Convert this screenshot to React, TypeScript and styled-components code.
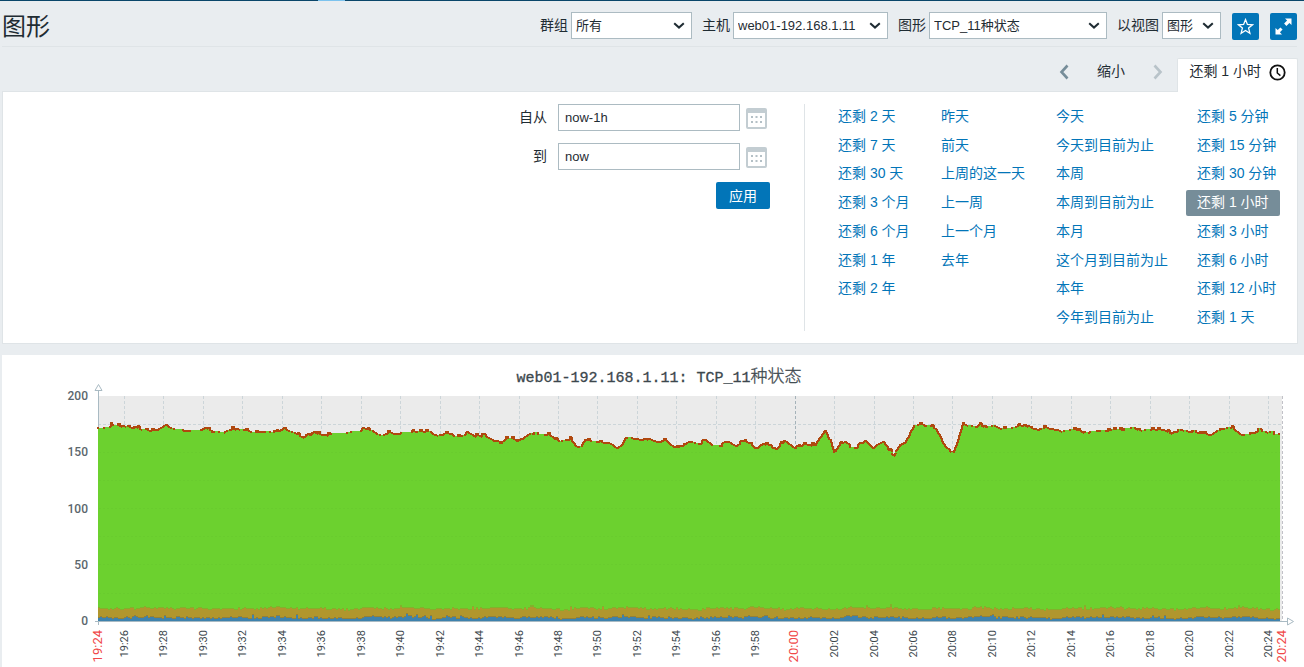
import React from 'react';
import styled, { createGlobalStyle } from 'styled-components';

const sans = '"Liberation Sans", Arial, "Noto Sans CJK SC", sans-serif';

const GlobalStyle = createGlobalStyle`
  *, *::before, *::after { box-sizing: border-box; }
  body {
    margin: 0;
    background: #e9edf0;
    color: #1f2c33;
    font-family: ${sans};
    font-size: 14px;
    font-weight: 400;
  }
  button, input, select { font-family: inherit; font-weight: inherit; color: inherit; }
`;

const NavEdge = styled.div`
  height: 1px;
  padding-left: 318px;
  background: #0a466a;
`;

const NavActive = styled.div`
  width: 27px;
  height: 1px;
  background: #7cc3ee;
`;

const Article = styled.main`
  padding: 0 0 0 2px;
`;

const Header = styled.header`
  display: flex;
  align-items: center;
  justify-content: space-between;
  height: 46px;
  margin-right: 7px;
  padding-top: 4px;
  border-bottom: 1px solid #dfe4e7;
`;

const Title = styled.h1`
  margin: 0;
  padding-top: 2px;
  font-size: 24px;
  line-height: 28px;
  font-weight: 400;
`;

const Filters = styled.form`
  display: flex;
  align-items: center;
  gap: 10px;
`;

const Field = styled.div`
  display: flex;
  align-items: center;
  gap: 3px;
  white-space: nowrap;
`;

const Label = styled.label`
  padding-bottom: 3px;
`;

const SelectBox = styled.div<{ $width: number }>`
  position: relative;
  width: ${(p) => p.$width}px;

  svg {
    position: absolute;
    top: 10px;
    right: 7px;
    pointer-events: none;
  }
`;

const Select = styled.select`
  display: block;
  width: 100%;
  height: 27px;
  padding: 0 0 1px 4px;
  border: 1px solid #acbbc2;
  border-radius: 0;
  background-color: #fff;
  font-size: 13px;
  appearance: none;
`;

const IconButton = styled.button`
  display: flex;
  align-items: center;
  justify-content: center;
  width: 27px;
  height: 27px;
  padding: 0;
  border: 0;
  border-radius: 2px;
  background: #0275b8;
`;

const ButtonPair = styled.div`
  display: flex;
  gap: 11px;
  margin-left: 1px;
  padding-top: 2px;
`;

const TimeBar = styled.nav`
  display: flex;
  justify-content: flex-end;
  height: 45px;
  margin: 0 6px -1px 0;
  padding-top: 11px;
`;

const BarButton = styled.button`
  display: flex;
  align-items: center;
  justify-content: center;
  height: 27px;
  padding: 0;
  border: 0;
  background: transparent;
`;

const ArrowButton = styled(BarButton)`
  width: 27px;
`;

const ZoomOutButton = styled(BarButton)`
  width: 67px;
  padding-bottom: 3px;
  font-size: 14px;
`;

const TimeTab = styled.a`
  display: flex;
  align-items: flex-start;
  gap: 8px;
  height: 34px;
  margin-left: 6px;
  padding: 0 11px;
  border: 1px solid #dfe4e7;
  border-bottom: 0;
  border-radius: 2px 2px 0 0;
  background: #fff;
  color: inherit;
  line-height: 24px;
  text-decoration: none;
  white-space: nowrap;
  z-index: 1;

  svg { margin-top: 5px; }
`;

const TimePanel = styled.section`
  display: flex;
  margin: 0 6px 11px 0;
  padding: 12px 9px 12px 0;
  border: 1px solid #dfe4e7;
  background: #fff;
`;

const RangeForm = styled.form`
  display: flex;
  flex: 1;
  flex-direction: column;
  align-items: flex-end;
  gap: 12px;
  padding-right: 34px;
  border-right: 1px solid #dfe4e7;
`;

const RangeRow = styled.div`
  display: flex;
  align-items: center;
`;

const TextInput = styled.input`
  width: 182px;
  height: 27px;
  margin-left: 11px;
  padding: 0 6px;
  border: 1px solid #acbbc2;
  background: #fff;
  font-size: 13px;
`;

const CalendarButton = styled.button`
  width: 24px;
  height: 21px;
  margin-left: 6px;
  padding: 0;
  border: 0;
  background: transparent;
  text-align: left;

  svg { display: block; margin-top: 1px; }
`;

const ApplyButton = styled.button`
  width: 54px;
  height: 27px;
  padding: 0 0 2px;
  border: 0;
  border-radius: 2px;
  background: #0275b8;
  && { color: #fff; }
  font-size: 14px;
`;

const Presets = styled.div`
  display: grid;
  grid-template-columns: 103px 115px 141px 102px;
  height: 227px;
  margin-left: 22px;
`;

const PresetList = styled.ul`
  display: grid;
  grid-template-rows: repeat(8, 26px);
  align-content: space-between;
  justify-items: start;
  margin: 0;
  padding: 0;
  list-style: none;
`;

const PresetLink = styled.a<{ $selected?: boolean }>`
  display: block;
  padding: 0 11px 2px;
  border-radius: 2px;
  background: ${(p) => (p.$selected ? '#768d99' : 'transparent')};
  color: ${(p) => (p.$selected ? '#fff' : '#0275b8')};
  line-height: 24px;
  text-decoration: none;
  white-space: nowrap;
`;

const ChartCard = styled.section`
  background: #fff;

  svg { display: block; width: 100%; height: auto; }
`;

const ChartTitle = styled.text`
  fill: #3c474d;
  stroke: #3c474d;
  stroke-width: 0.3px;
  font-family: "Liberation Mono", "Noto Sans CJK SC", monospace;
  font-size: 15px;
  font-weight: 400;

  tspan { font-size: 17px; font-weight: 300; }
`;

const ValueLabel = styled.text`
  fill: #5a666c;
  font-family: Roboto, sans-serif;
  font-size: 12px;
  font-weight: 500;
`;

const TimeLabel = styled.text<{ $major?: boolean }>`
  fill: ${(p) => (p.$major ? '#f04848' : '#3c474d')};
  font-family: Roboto, sans-serif;
  font-size: ${(p) => (p.$major ? 13 : 11)}px;
  font-weight: 400;
`;

const presets = [
  ['还剩 2 天', '还剩 7 天', '还剩 30 天', '还剩 3 个月', '还剩 6 个月', '还剩 1 年', '还剩 2 年'],
  ['昨天', '前天', '上周的这一天', '上一周', '上一个月', '去年'],
  ['今天', '今天到目前为止', '本周', '本周到目前为止', '本月', '这个月到目前为止', '本年', '今年到目前为止'],
  ['还剩 5 分钟', '还剩 15 分钟', '还剩 30 分钟', '还剩 1 小时', '还剩 3 小时', '还剩 6 小时', '还剩 12 小时', '还剩 1 天'],
];

// Chart geometry, in the units of the SVG view box.
const LEFT = 96;
const RIGHT = 1278;
const TOP = 41;
const BASE = 266;
const OX = 2;
const OY = 355;

// Turning points of the total connection count.
const outline: [number, number][] = [
  [98, 427], [105, 426], [110, 425], [111, 421], [113, 424], [122, 424], [130, 426], [137, 425], [140, 428], [152, 429], [157, 428],
  [163, 425], [166, 423], [169, 426], [175, 428], [190, 429], [200, 429], [205, 426], [213, 430], [224, 431], [228, 428],
  [234, 427], [247, 429], [252, 431], [264, 430], [275, 431], [283, 427], [285, 428], [293, 431], [298, 433], [302, 436],
  [309, 434], [315, 432], [325, 433], [335, 432], [345, 432], [352, 430], [360, 430], [363, 426], [366, 428], [372, 429],
  [377, 433], [382, 434], [388, 431], [395, 432], [405, 431], [420, 430], [430, 430], [433, 433], [451, 432], [454, 435],
  [464, 434], [468, 431], [474, 434], [483, 434], [490, 437], [498, 442], [503, 440], [506, 437], [513, 437], [519, 441],
  [524, 436], [530, 432], [536, 433], [549, 433], [554, 437], [560, 440], [570, 437], [576, 445], [581, 444], [585, 438],
  [592, 440], [608, 441], [613, 444], [617, 447], [622, 443], [625, 436], [632, 436], [639, 438], [648, 437], [656, 440],
  [666, 439], [672, 444], [676, 447], [682, 443], [690, 440], [700, 443], [705, 438], [712, 444], [722, 444], [728, 440],
  [736, 445], [745, 438], [755, 447], [761, 443], [767, 441], [776, 448], [784, 439], [795, 447], [803, 443], [815, 443],
  [820, 436], [825, 429], [830, 440], [834, 450], [840, 443], [845, 440], [850, 446], [857, 446], [865, 439], [873, 447],
  [877, 443], [883, 440], [889, 448], [894, 454], [896, 449], [900, 443], [905, 441], [909, 433], [914, 424], [920, 423],
  [930, 424], [936, 428], [941, 437], [946, 446], [953, 451], [956, 444], [960, 431], [963, 423], [968, 424], [975, 425],
  [980, 423], [984, 426], [994, 424], [1000, 427], [1010, 427], [1024, 423], [1030, 425], [1037, 428], [1045, 426],
  [1060, 429], [1075, 428], [1086, 431], [1100, 429], [1120, 428], [1134, 426], [1138, 429], [1150, 428], [1162, 428],
  [1170, 431], [1185, 429], [1192, 431], [1205, 432], [1210, 434], [1220, 427], [1232, 426], [1240, 433], [1250, 433],
  [1258, 429], [1268, 431], [1275, 433], [1281, 432],
];

function makeRandom(seed: number) {
  let state = seed;
  return () => {
    state = (state + 0x6d2b79f5) | 0;
    let t = Math.imul(state ^ (state >>> 15), 1 | state);
    t = (t + Math.imul(t ^ (t >>> 7), 61 | t)) ^ t;
    return ((t ^ (t >>> 14)) >>> 0) / 4294967296;
  };
}

function outlineAt(x: number): number {
  const px = x + OX;
  const next = Math.max(1, outline.findIndex(([ax]) => ax >= px));
  const [x0, y0] = outline[next - 1];
  const [x1, y1] = outline[next];
  return y0 + ((y1 - y0) * (px - x0)) / (x1 - x0) - OY;
}

function buildSeries() {
  const random = makeRandom(42);
  const top: [number, number][] = [];
  let red = '';
  let previous = Math.round(outlineAt(LEFT));
  let jitter = 0;
  let marked = false;
  for (let x = LEFT; x < RIGHT; x += 1) {
    if (x % 2 === 0) {
      const roll = random();
      jitter = roll < 0.16 ? -2 : roll < 0.26 ? 1 : 0;
      if (random() < 0.4) marked = random() < 0.35;
    }
    const y = Math.round(outlineAt(x)) + jitter + 1;
    top.push([x, y]);
    const low = Math.min(y, previous);
    const height = Math.abs(y - previous) + 1;
    if (y !== previous) red += `M${x - 1} ${low}h2v${height}h-2z`;
    else if (marked) red += `M${x} ${y}h1v2h-1z`;
    previous = y;
  }
  return { top, red };
}

function buildBand(seed: number, level: number, swell: number): [number, number][] {
  const random = makeRandom(seed);
  const points: [number, number][] = [];
  for (let x = LEFT; x < RIGHT; x += 2) {
    const wave = Math.sin(x / 19) * swell + Math.sin(x / 7) * swell;
    const spike = random() < 0.05 ? 2 : 0;
    points.push([x, Math.round(level - wave - random() * 2 - spike)]);
  }
  return points;
}

function areaPath(points: [number, number][], step: number): string {
  return `M${LEFT} ${BASE}` + points.map(([x, y]) => `V${y}H${Math.min(x + step, RIGHT)}`).join('') + `V${BASE}Z`;
}

const series = buildSeries();
const fringe = buildBand(7, 254, 0.5);
const olive = fringe.map(([x, y]): [number, number] => [x, Math.max(y + 1, 252)]);
const blueShade = buildBand(19, 263, 0.5);
const blue = blueShade.map(([x, y]): [number, number] => [x, y + 1]);

const ticks = Array.from({ length: 30 }, (_, i) => {
  const minutes = 19 * 60 + 26 + i * 2;
  const label = `${Math.floor(minutes / 60)}:${String(minutes % 60).padStart(2, '0')}`;
  return { x: Math.round(122 + i * 39.45), label, major: label === '20:00' };
});

const Chart = () => (
  <svg viewBox="0 0 1302 312" role="img" aria-label="TCP_11种状态">
    <rect x={LEFT} y={TOP} width={1280 - LEFT} height={BASE - TOP} fill="#ebebeb" />
    <g shapeRendering="crispEdges" fill="none" stroke="#ccd5d9" strokeDasharray="3 2">
      {ticks.map((t) => (
        <path key={t.label} d={`M${t.x + 0.5} ${TOP}V${BASE}`} stroke={t.major ? '#a5b2b9' : undefined} />
      ))}
      <path d="M96 69.5H1280" />
      <path d="M1280.5 41V266" stroke="#c2c2c8" />
    </g>
    <path d="M96.5 35V270" stroke="#a9bac3" shapeRendering="crispEdges" />
    <g shapeRendering="crispEdges">
      <path d={areaPath(series.top, 1)} fill="#6cd12f" />
      <path d={series.red} fill="#b0480f" />
      <path d={areaPath(fringe, 2)} fill="#82b12b" />
      <path d={areaPath(olive, 2)} fill="#b1962d" />
      <path d={areaPath(blueShade, 2)} fill="#92803a" />
      <path d={areaPath(blue, 2)} fill="#3e82ad" />
    </g>
    <g shapeRendering="crispEdges" fill="none">
      <path d="M93 266.5H1285" stroke="#a9bac3" />
      <path d="M97 97.5H1278M97 125.5H1278M97 153.5H1278M97 181.5H1278M97 209.5H1278M97 238.5H1278" stroke="#69cc2e" strokeDasharray="2 2" />
    </g>
    <g fill="#fff" stroke="#a9bac3">
      <path d="M93 35.5H100L96.5 29.5Z" />
      <path d="M1285.5 263V270L1291.5 266.5Z" />
    </g>
    <ChartTitle x={657} y={27} textAnchor="middle">web01-192.168.1.11: TCP_11<tspan>种状态</tspan></ChartTitle>
    {[200, 150, 100, 50, 0].map((value, i) => (
      <ValueLabel key={value} x={86} y={45 + Math.round(i * 56.25)} textAnchor="end">{value}</ValueLabel>
    ))}
    {ticks.map((t) => (
      <TimeLabel key={t.label} $major={t.major} transform={`translate(${t.x + (t.major ? 3 : 4)} 275) rotate(-90)`} textAnchor="end">
        {t.label}
      </TimeLabel>
    ))}
    <TimeLabel $major transform="translate(100 275) rotate(-90)" textAnchor="end">19:24</TimeLabel>
    <TimeLabel $major transform="translate(1284 275) rotate(-90)" textAnchor="end">20:24</TimeLabel>
  </svg>
);

const StarIcon = () => (
  <svg width="17" height="17" viewBox="0 0 17 17" fill="none" stroke="#fff" strokeWidth="1.3">
    <path d="M8.5 1.6L10.4 6.5L15.6 6.8L11.6 10.1L12.9 15.2L8.5 12.4L4.1 15.2L5.4 10.1L1.4 6.8L6.6 6.5Z" />
  </svg>
);

const ExpandIcon = () => (
  <svg width="17" height="17" viewBox="0 0 17 17" fill="#fff">
    <path d="M10 0.5H16.5V7L14.4 4.9L11.4 7.9L9.1 5.6L12.1 2.6ZM0.5 9.9L2.7 12.1L5.4 9.4L7.6 11.6L4.9 14.3L7 16.5H0.5Z" />
  </svg>
);

const DropIcon = () => (
  <svg width="12" height="8" viewBox="0 0 12 8" fill="none" stroke="#1f2c33" strokeWidth="2">
    <path d="M1.2 1.2L6 5.6L10.8 1.2" />
  </svg>
);

const Chevron = ({ right }: { right?: boolean }) => (
  <svg width="10" height="16" viewBox="0 0 10 16" fill="none" stroke={right ? '#b8c3c9' : '#768d99'} strokeWidth="2.6">
    <path d={right ? 'M1.5 1.5L7.5 8L1.5 14.5' : 'M8.5 1.5L2.5 8L8.5 14.5'} />
  </svg>
);

const ClockIcon = () => (
  <svg width="17" height="17" viewBox="0 0 17 17" fill="none" stroke="#111" strokeWidth="1.8">
    <circle cx="8.5" cy="8.5" r="7.2" />
    <path d="M8.3 4V9L11.4 11.6" strokeWidth="1.5" />
  </svg>
);

const CalendarIcon = () => (
  <svg width="21" height="21" viewBox="0 0 21 21">
    <rect x="1" y="1" width="19" height="19" rx="1" fill="#fff" stroke="#c3cdd2" strokeWidth="2" />
    <path d="M1 1H20V5H1Z" fill="#c3cdd2" />
    <path d="M5 8h2v2h-2zM9.500 8h2v2h-2zM14 8h2v2h-2zM5 13h2v2h-2zM9.500 13h2v2h-2zM14 13h2v2h-2z" fill="#b4c0c6" />
  </svg>
);

const filters = [
  { id: 'group', label: '群组', value: '所有', width: 121 },
  { id: 'host', label: '主机', value: 'web01-192.168.1.11', width: 155 },
  { id: 'graph', label: '图形', value: 'TCP_11种状态', width: 178 },
  { id: 'view', label: '以视图', value: '图形', width: 59 },
];

export default function App() {
  return (
    <>
      <GlobalStyle />
      <NavEdge><NavActive /></NavEdge>
      <Article>
        <Header>
          <Title>图形</Title>
          <Filters>
            {filters.map((f) => (
              <Field key={f.id}>
                <Label htmlFor={f.id}>{f.label}</Label>
                <SelectBox $width={f.width}>
                  <Select id={f.id}><option>{f.value}</option></Select>
                  <DropIcon />
                </SelectBox>
              </Field>
            ))}
            <ButtonPair>
              <IconButton type="button" aria-label="收藏"><StarIcon /></IconButton>
              <IconButton type="button" aria-label="全屏"><ExpandIcon /></IconButton>
            </ButtonPair>
          </Filters>
        </Header>
        <TimeBar>
          <ArrowButton type="button" aria-label="后退"><Chevron /></ArrowButton>
          <ZoomOutButton type="button">缩小</ZoomOutButton>
          <ArrowButton type="button" aria-label="前进"><Chevron right /></ArrowButton>
          <TimeTab href="#time">还剩 1 小时<ClockIcon /></TimeTab>
        </TimeBar>
        <TimePanel id="time">
          <RangeForm>
            <RangeRow>
              <Label htmlFor="from">自从</Label>
              <TextInput id="from" defaultValue="now-1h" />
              <CalendarButton type="button" aria-label="开始日期"><CalendarIcon /></CalendarButton>
            </RangeRow>
            <RangeRow>
              <Label htmlFor="to">到</Label>
              <TextInput id="to" defaultValue="now" />
              <CalendarButton type="button" aria-label="结束日期"><CalendarIcon /></CalendarButton>
            </RangeRow>
            <ApplyButton type="button">应用</ApplyButton>
          </RangeForm>
          <Presets>
            {presets.map((column) => (
              <PresetList key={column[0]}>
                {column.map((text) => (
                  <li key={text}><PresetLink href="#time" $selected={text === '还剩 1 小时'}>{text}</PresetLink></li>
                ))}
              </PresetList>
            ))}
          </Presets>
        </TimePanel>
        <ChartCard><Chart /></ChartCard>
      </Article>
    </>
  );
}
